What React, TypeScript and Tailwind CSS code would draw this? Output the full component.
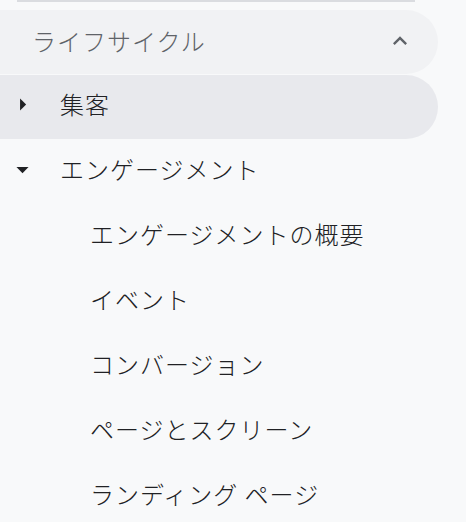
import React from "react";

const font = { fontFamily: '"Noto Sans CJK JP", "Noto Sans", sans-serif' };

function ArrowRight() {
  return (
    <svg width="29" height="29" viewBox="0 0 24 24" className="shrink-0">
      <path d="M10 17l5-5-5-5v10z" fill="#202124" />
    </svg>
  );
}

function ArrowDown() {
  return (
    <svg width="29" height="29" viewBox="0 0 24 24" className="shrink-0">
      <path d="M7 10l5 5 5-5H7z" fill="#202124" />
    </svg>
  );
}

function ExpandLess() {
  return (
    <svg width="28" height="28" viewBox="0 0 24 24">
      <path d="M12 8l-6 6 1.41 1.41L12 10.83l4.59 4.58L18 14z" fill="#5f6368" />
    </svg>
  );
}

const subItems = [
  "エンゲージメントの概要",
  "イベント",
  "コンバージョン",
  "ページとスクリーン",
  "ランディング ページ",
];

export default function App() {
  return (
    <div className="w-[466px] h-[522px] bg-[#f8f9fa] overflow-hidden font-light" style={font}>
      <div className="ml-[17px] w-[398px] h-[2px] bg-[#dadce0]" />
      <div className="mt-[8px] w-[438px] flex flex-col gap-px">
        <div className="h-[64px] rounded-r-[32px] bg-[#f1f2f4] flex items-center pl-[32px] pr-[24px] pb-[2px] justify-between">
          <span className="text-[24px] tracking-[1px] text-[#5f6368]">ライフサイクル</span>
          <ExpandLess />
        </div>
        <div className="h-[64px] rounded-r-[32px] bg-[#e8e9ed] flex items-center pl-[8px] pb-[6px]">
          <ArrowRight />
          <span className="ml-[23px] text-[24px] tracking-[1px] text-[#202124]">集客</span>
        </div>
        <div className="h-[64px] flex items-center pl-[8px] pb-[6px]">
          <ArrowDown />
          <span className="ml-[23px] text-[24px] tracking-[1px] text-[#202124]">エンゲージメント</span>
        </div>
        {subItems.map((s) => (
          <div key={s} className="h-[64px] flex items-center pl-[90px] pb-[6px]">
            <span className="text-[24px] tracking-[1px] text-[#202124] whitespace-pre">{s}</span>
          </div>
        ))}
      </div>
    </div>
  );
}
